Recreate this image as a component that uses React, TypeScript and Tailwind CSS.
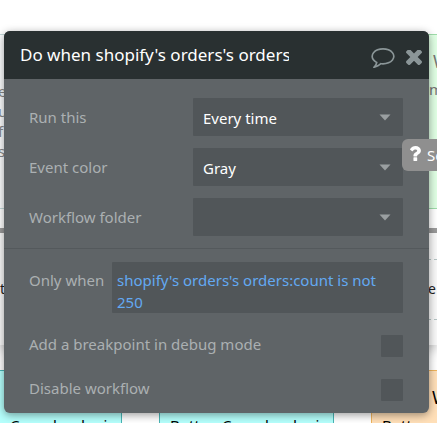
const rowLabel = 'text-[15px] text-[#abb0b2]'

function CommentIcon() {
  return (
    <svg className="h-5 w-6" viewBox="0 256 1792 1536" fill="currentColor">
      <path d="M896 384q-204 0-381.5 69.5t-282 187.5-104.5 255q0 112 71.5 213.5t201.5 175.5l87 50-27 96q-24 91-70 172 152-63 275-171l43-38 57 6q69 8 130 8 204 0 381.5-69.5t282-187.5 104.5-255-104.5-255-282-187.5-381.5-69.5zm896 512q0 174-120 321.5t-326 233-450 85.5q-70 0-145-8-198 175-460 242-49 14-114 22h-5q-15 0-27-10.5t-16-27.5v-1q-3-4-.5-12t2-10 4.5-9.5l6-9 7-8.5 8-9q7-8 31-34.5t34.5-38 31-39.5 32.5-51 27-59 26-76q-157-89-247.5-220t-90.5-281q0-174 120-321.5t326-233 450-85.5 450 85.5 326 233 120 321.5z" />
    </svg>
  )
}

function CloseIcon() {
  return (
    <svg className="size-4" viewBox="302 434 1188 1188" fill="currentColor">
      <path d="M1490 1322q0 40-28 68l-136 136q-28 28-68 28t-68-28l-294-294-294 294q-28 28-68 28t-68-28l-136-136q-28-28-28-68t28-68l294-294-294-294q-28-28-28-68t28-68l136-136q28-28 68-28t68 28l294 294 294-294q28-28 68-28t68 28l136 136q28 28 28 68t-28 68l-294 294 294 294q28 28 28 68z" />
    </svg>
  )
}

function QuestionIcon() {
  return (
    <svg className="mb-1 h-[15px] w-[11px] shrink-0" viewBox="484 256 920 1280" fill="currentColor">
      <path d="M1088 1256v240q0 16-12 28t-28 12h-240q-16 0-28-12t-12-28v-240q0-16 12-28t28-12h240q16 0 28 12t12 28zm316-600q0 54-15.5 101t-35 76.5-55 59.5-57.5 43.5-61 35.5q-41 23-68.5 65t-27.5 67q0 17-12 32.5t-28 15.5h-240q-15 0-25.5-18.5t-10.5-37.5v-45q0-83 65-156.5t143-108.5q59-27 84-56t25-76q0-42-46.5-74t-107.5-32q-65 0-108 29-35 25-107 115-13 16-31 16-12 0-25-8l-164-125q-13-10-15.5-25t5.5-28q160-266 464-266 80 0 161 31t146 83 106 127.5 41 158.5z" />
    </svg>
  )
}

function SelectRow({ id, label, options }: { id: string; label: string; options: string[] }) {
  return (
    <div className="flex items-center justify-between">
      <label htmlFor={id} className={rowLabel}>{label}</label>
      <div className="relative w-[210px]">
        <select
          id={id}
          className="block h-[38px] w-full appearance-none rounded-[1px] bg-[#515659] pt-0.5 pr-8 pl-2.5 text-[15px] text-white outline-none"
        >
          {options.map((option) => (
            <option key={option}>{option}</option>
          ))}
        </select>
        <svg className="pointer-events-none absolute top-4 right-3 h-[7px] w-3 text-[#9a9fa1]" viewBox="0 0 12 7" fill="currentColor">
          <path d="M0.5 0.5H11.5L6 6.5Z" />
        </svg>
      </div>
    </div>
  )
}

function CheckRow({ id, label }: { id: string; label: string }) {
  return (
    <div className="flex items-start justify-between">
      <label htmlFor={id} className={`leading-[18px] ${rowLabel}`}>{label}</label>
      <input id={id} type="checkbox" className="size-[22px] appearance-none rounded-[1px] bg-[#515659] checked:bg-[#6eaef2]" />
    </div>
  )
}

function EventCard({ title, text, color }: { title?: string; text?: string; color: string }) {
  return (
    <div className={`h-[175px] w-[175px] shrink-0 overflow-hidden border px-2.5 pt-3.5 ${color}`}>
      <div className="h-6 pl-[50px] text-lg leading-6">{title}</div>
      <p className="mt-1.5 text-[15px] leading-5 whitespace-pre">{text}</p>
    </div>
  )
}

function Canvas() {
  return (
    <div className="h-screen overflow-hidden bg-white pt-[34px]">
      <div className="-ml-[53px] flex gap-[37px]">
        <div className="h-[175px] w-[175px] shrink-0 border border-[#c3d9d9] bg-[#fbfcfd] pt-[46px] pl-[50px] text-[15px] leading-5 text-[#888]">
          <p>e</p>
          <p>u</p>
          <p>f</p>
          <p>s</p>
        </div>
        <EventCard color="border-[#c3d9d9] bg-white" />
        <div className="h-[175px] w-[175px] shrink-0 overflow-hidden border border-[#9fdcaa] bg-[#e0ffe4] pt-3.5 pl-[57px] text-[#777]">
          <div className="pl-1 text-lg leading-6">W</div>
          <p className="mt-1.5 text-[15px] leading-5">m</p>
        </div>
      </div>
      <div className="mt-[19px] h-[5px] bg-[#9d9d9d]" />
      <div className="flex h-28 items-center justify-between bg-[#f8f8f8] text-sm text-[#222] shadow-[0_4px_12px_rgba(0,0,0,0.25)]">
        <span>t</span>
        <div className="flex h-[61px] w-[9px] items-center border-y border-dashed border-[#b5c4c4]">e</div>
      </div>
      <div className="mt-[25px] -ml-[53px] flex gap-[37px]">
        <EventCard text="Button Cancel order is" color="border-[#49b5b5] bg-[#b5fffc] text-black" />
        <EventCard text="Button Cancel order is" color="border-[#49b5b5] bg-[#b5fffc] text-black" />
        <EventCard title="W" text="Button" color="border-[#efb45c] bg-[#ffdfb8] text-black" />
      </div>
    </div>
  )
}

export default function App() {
  return (
    <main className="relative overflow-hidden font-['Noto_Sans',sans-serif]">
      <Canvas />
      <section className="absolute top-[31px] right-2 left-1 overflow-hidden rounded-md bg-[#5f6467] shadow-[0_2px_8px_rgba(0,0,0,0.4)]">
        <header className="flex h-12 items-center bg-[#293031] pr-[7px] pl-4">
          <h1 className="w-[269px] overflow-hidden text-[17px] leading-6 whitespace-nowrap text-white">
            Do when shopify's orders's orders:count is not 250
          </h1>
          <button aria-label="Comments" className="mt-1.5 ml-auto text-[#8b9698]">
            <CommentIcon />
          </button>
          <button aria-label="Close" className="mt-1.5 ml-[11px] text-[#8b9698]">
            <CloseIcon />
          </button>
        </header>
        <div className="flex flex-col gap-3 border-b border-[#54595c] pt-[19px] pr-[26px] pb-3 pl-[25px]">
          <SelectRow id="run" label="Run this" options={['Every time', 'Just once']} />
          <SelectRow id="color" label="Event color" options={['Gray', 'Green']} />
          <SelectRow id="folder" label="Workflow folder" options={['']} />
        </div>
        <div className="flex flex-col gap-[22px] pt-[13px] pr-[26px] pb-3 pl-[25px]">
          <div className="flex items-start">
            <label htmlFor="condition" className={`w-[83px] shrink-0 pt-[7px] leading-[22px] ${rowLabel}`}>Only when</label>
            <textarea
              id="condition"
              rows={2}
              defaultValue="shopify's orders's orders:count is not 250"
              className="h-[51px] min-w-0 flex-1 resize-none overflow-hidden rounded-[1px] bg-[#515659] px-[5px] pt-[7px] text-[15px] leading-[22px] text-[#63a9f2] outline-none"
            />
          </div>
          <CheckRow id="breakpoint" label="Add a breakpoint in debug mode" />
          <CheckRow id="disable" label="Disable workflow" />
        </div>
      </section>
      <button className="absolute top-[139px] left-[402px] flex h-8 items-center gap-1.5 rounded-md bg-[#8f8f8f] px-2 text-[15px] whitespace-nowrap text-white">
        <QuestionIcon />
        See reference
      </button>
    </main>
  )
}
